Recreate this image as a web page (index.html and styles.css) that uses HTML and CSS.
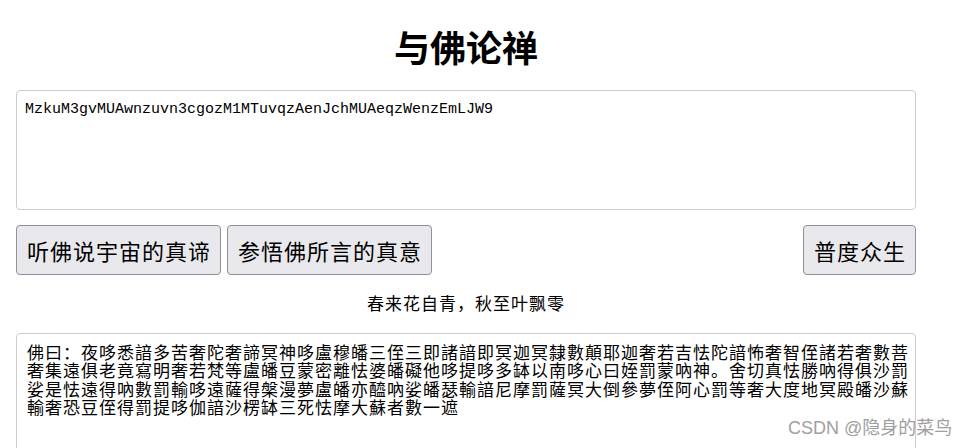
FILE: index.html
```html
<!DOCTYPE html>
<html lang="zh-CN">
<head>
  <meta charset="UTF-8" />
  <meta name="viewport" content="width=device-width, initial-scale=1.0" />
  <title>与佛论禅</title>
  <link rel="stylesheet" href="styles.css">
</head>
<body>
  <div class="page">
    <h1>与佛论禅</h1>

    <textarea id="plainText" class="box box-plain">MzkuM3gvMUAwnzuvn3cgozM1MTuvqzAenJchMUAeqzWenzEmLJW9</textarea>

    <div class="actions">
      <button type="button">听佛说宇宙的真谛</button>
      <button type="button">参悟佛所言的真意</button>
      <button type="button" class="push-right">普度众生</button>
    </div>

    <p class="motto">春来花自青，秋至叶飘零</p>

    <textarea id="buddhaText" class="box box-buddha">佛曰：夜哆悉諳多苦奢陀奢諦冥神哆盧穆皤三侄三即諸諳即冥迦冥隸數顛耶迦奢若吉怯陀諳怖奢智侄諸若奢數菩奢集遠俱老竟寫明奢若梵等盧皤豆蒙密離怯婆皤礙他哆提哆多缽以南哆心曰姪罰蒙吶神。舍切真怯勝吶得俱沙罰娑是怯遠得吶數罰輸哆遠薩得槃漫夢盧皤亦醯吶娑皤瑟輸諳尼摩罰薩冥大倒參夢侄阿心罰等奢大度地冥殿皤沙蘇輸奢恐豆侄得罰提哆伽諳沙楞缽三死怯摩大蘇者數一遮</textarea>
  </div>

  <div class="watermark">CSDN @隐身的菜鸟</div>
</body>
</html>
```

FILE: styles.css
```css
* { box-sizing: border-box; }

body {
  margin: 0;
  background: #fff;
  color: #000;
  font-family: "Noto Sans CJK SC", "Noto Sans", sans-serif;
  overflow: hidden;
}

.page {
  width: 900px;
  margin: 0 16px;
}

h1 {
  margin: 0 0 22px;
  padding-top: 24px;
  font-size: 36px;
  line-height: 44px;
  font-weight: bold;
  text-align: center;
}

.box {
  display: block;
  width: 100%;
  border: 1px solid #ccc;
  border-radius: 4px;
  resize: none;
  outline: none;
  color: #000;
  background: #fff;
}

.box-plain {
  height: 120px;
  padding: 10px 8px;
  font-family: "Liberation Mono", "Noto Sans CJK SC", monospace;
  font-size: 15px;
  line-height: 17px;
}

.box-buddha {
  height: 150px;
  margin-top: 20px;
  padding: 9px 4px 8px 10px;
  font-family: "Noto Sans CJK SC", sans-serif;
  font-size: 17px;
  letter-spacing: 1px;
  line-height: 18.4px;
}

.actions {
  display: flex;
  gap: 6px;
  margin-top: 15px;
}

button {
  height: 50px;
  padding: 0 9px 0 10px;
  background-color: #e9e9ed;
  border: 1px solid #8f8f9d;
  border-radius: 4px;
  color: #000;
  font-family: "Noto Sans CJK SC", sans-serif;
  font-size: 22px;
  letter-spacing: 1px;
  cursor: pointer;
}

button:hover {
  background-color: #d0d0d7;
}

.push-right {
  margin-left: auto;
}

.motto {
  margin: 18px 0 0;
  font-size: 17px;
  letter-spacing: 1px;
  line-height: 20px;
  text-align: center;
}

.watermark {
  position: absolute;
  top: 417px;
  left: 788px;
  color: #a0a0a0;
  font-family: "Liberation Sans", "Noto Sans CJK SC", sans-serif;
  font-size: 18px;
  line-height: 22px;
  white-space: nowrap;
}
```
